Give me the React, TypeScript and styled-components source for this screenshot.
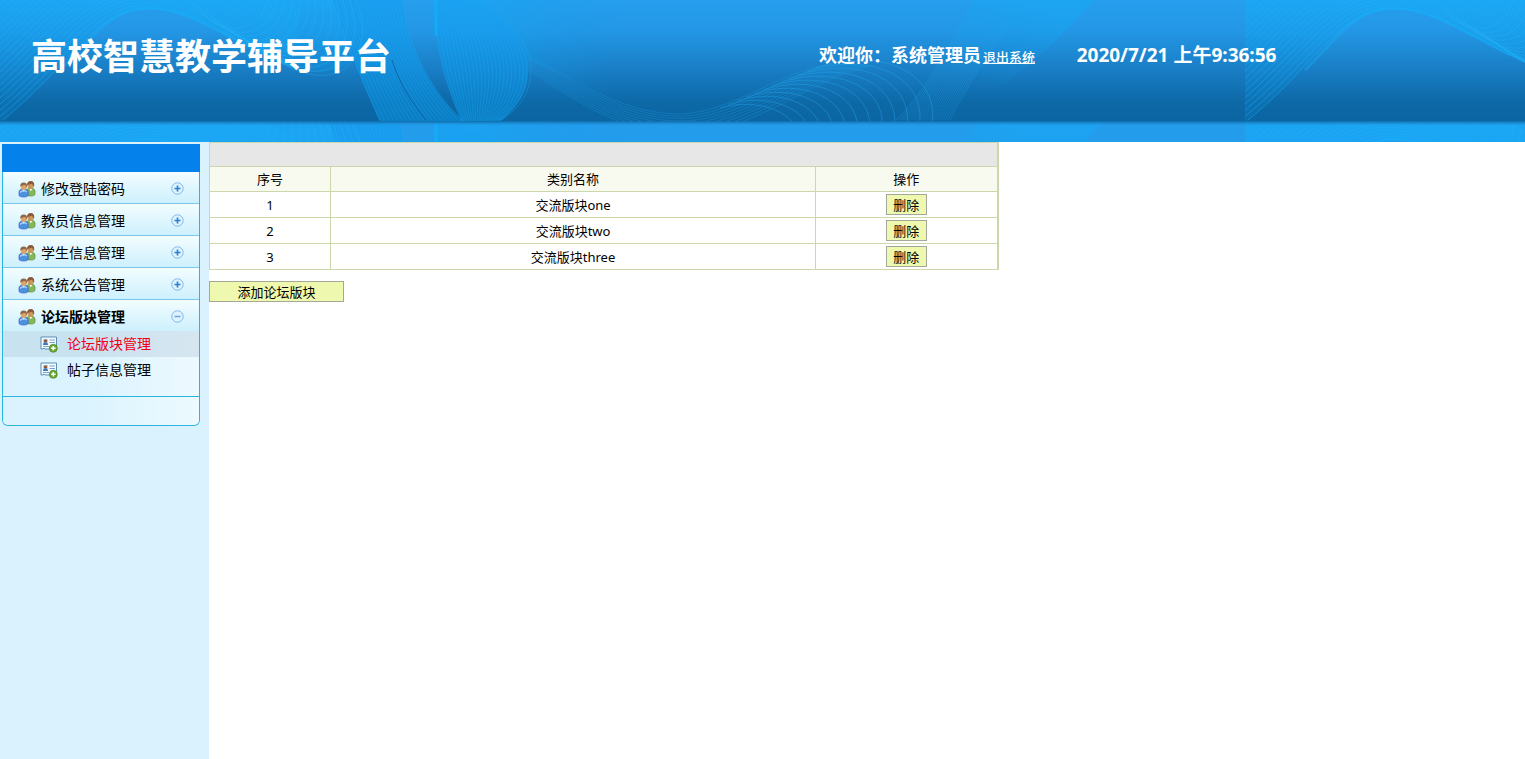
import React from "react";
import styled, { createGlobalStyle } from "styled-components";

const GlobalStyle = createGlobalStyle`
  *, *::before, *::after { box-sizing: border-box; }
  html, body, #root { height: 100%; }
  body {
    margin: 0;
    background: #fff;
    color: #000;
    font-family: "Noto Sans", "Noto Sans CJK SC", sans-serif;
    font-size: 13px;
  }
`;

const Page = styled.div`
  display: flex;
  flex-direction: column;
  min-height: 100%;
`;

const Header = styled.header`
  position: relative;
  display: grid;
  grid-template-columns: 53.7% 16.9% 1fr;
  align-items: center;
  height: 142px;
  padding-bottom: 30px;
  overflow: hidden;
  color: #fff;
  background: #2199ea;
`;

const Backdrop = styled.svg`
  position: absolute;
  inset: 0;
  width: 100%;
  height: 100%;
`;

const Title = styled.h1`
  position: relative;
  margin: 0;
  padding: 2px 0 0 31px;
  font-size: 36px;
  line-height: 48px;
  font-weight: 700;
`;

const Welcome = styled.div`
  position: relative;
  display: flex;
  align-items: baseline;
  gap: 2px;
  font-size: 18px;
  line-height: 24px;
  font-weight: 700;
  white-space: nowrap;
`;

const LogoutLink = styled.a`
  color: #fff;
  font-size: 13px;
  font-weight: 500;
`;

const Clock = styled.time`
  position: relative;
  padding-bottom: 2px;
  font-size: 19px;
  line-height: 24px;
  font-weight: 700;
  white-space: nowrap;
`;

const Body = styled.div`
  display: flex;
  flex: 1;
`;

const Sidebar = styled.aside`
  flex: 0 0 209px;
  padding: 2px 9px 0 2px;
  background: #daf2fe;
`;

const MenuBanner = styled.div`
  height: 28px;
  background: #0581ec;
`;

const Menu = styled.nav`
  border: 1px solid #2bb4dc;
  border-top: 0;
  border-radius: 0 0 6px 6px;
  overflow: hidden;
`;

const MenuGroup = styled.button<{ $open?: boolean }>`
  display: flex;
  align-items: center;
  width: 100%;
  height: ${(p) => (p.$open ? "31px" : "32px")};
  padding: 2px 15px 0 15px;
  border: 0;
  border-bottom: ${(p) => (p.$open ? "0" : "1px solid #7cc6ee")};
  background: linear-gradient(#f3fdff, #cdf0fd);
  color: #000;
  font: inherit;
  font-size: 14px;
  font-weight: ${(p) => (p.$open ? 700 : 400)};
  text-align: left;
  cursor: pointer;
`;

const MenuLabel = styled.span`
  flex: 1;
  padding: 0 0 2px 5px;
`;

const SubMenu = styled.ul`
  margin: 0;
  padding: 0 0 13px;
  list-style: none;
  background: linear-gradient(90deg, #daf3fe 40%, #edf9ff);
`;

const SubLink = styled.a<{ $active?: boolean }>`
  display: flex;
  align-items: center;
  height: 26px;
  padding-left: 37px;
  background: ${(p) => (p.$active ? "linear-gradient(90deg, #c9e2ef 40%, #d6e6f1)" : "none")};
  color: ${(p) => (p.$active ? "#f00014" : "#000")};
  font-size: 14px;
  text-decoration: none;
`;

const SubLabel = styled.span`
  padding: 0 0 2px 9px;
`;

const MenuFooter = styled.div`
  height: 29px;
  border-top: 1px solid #2bb4dc;
  background: linear-gradient(90deg, #daf3fe 40%, #edfaff);
`;

const Main = styled.main`
  flex: 1;
`;

const Table = styled.table`
  width: 60%;
  border-collapse: collapse;
  table-layout: fixed;
  border: 1px solid #cbd8ac;
  border-right-width: 2px;
`;

const Column = styled.col<{ $width?: string }>`
  width: ${(p) => p.$width ?? "auto"};
`;

const BarCell = styled.td`
  height: 24px;
  padding: 0;
  background: #e7e7e7;
`;

const HeadCell = styled.th`
  height: 25px;
  padding: 0;
  border: 1px solid #cbd8ac;
  background: #f9faef;
  font-weight: 400;
  line-height: 18px;
`;

const Cell = styled.td`
  height: 26px;
  padding: 0;
  border: 1px solid #cbd8ac;
  text-align: center;
  line-height: 18px;
`;

const ActionButton = styled.button<{ $wide?: boolean }>`
  display: block;
  width: ${(p) => (p.$wide ? "135px" : "41px")};
  height: 21px;
  margin: ${(p) => (p.$wide ? "11px 0 0" : "0 auto")};
  padding: 0;
  border: 1px solid #a3a898;
  background: #eef8ae;
  color: #000;
  font: inherit;
  line-height: 18px;
  cursor: pointer;
`;

type Curve = number[];

/* Evenly spaced curves between two cubic paths given as flat coordinate lists. */
function blend(a: Curve, b: Curve, count: number): string[] {
  return Array.from({ length: count }, (_, i) => {
    const t = i / (count - 1);
    const p = a.map((v, k) => Math.round((v + (b[k] - v) * t) * 10) / 10);
    let d = `M${p[0]} ${p[1]}`;
    for (let k = 2; k < p.length; k += 6) {
      d += `C${p.slice(k, k + 6).join(" ")}`;
    }
    return d;
  });
}

const archLines = blend(
  [3, 120, 70, 66, 95, 9, 148, 8, 195, 8, 240, 48, 292, 66],
  [-70, 40, -20, -10, 20, -60, 110, -60, 190, -60, 230, -20, 300, 10],
  24
);
const fanLines = blend(
  [190, 0, 215, 36, 255, 40, 268, 0, 270, -10, 270, -20, 270, -30],
  [270, 56, 310, 84, 352, 84, 362, 40, 366, 10, 350, -10, 340, -30],
  13
);
const ribbonLines = blend(
  [325, -20, 340, 20, 352, 60, 380, 120],
  [400, -20, 404, 40, 425, 85, 464, 122],
  20
);
const leafLines = blend(
  [436, -20, 434, 40, 440, 70, 462, 122],
  [440, -20, 560, 30, 540, 100, 500, 120],
  24
);
const troughLines = blend(
  [528, 55, 590, 90, 630, 114, 680, 114, 740, 112, 790, 60, 850, 64],
  [528, 70, 590, 110, 630, 138, 700, 132, 760, 126, 810, 80, 870, 66],
  9
);
const loopLines = blend(
  [720, 108, 755, 98, 785, 110, 795, 125],
  [815, 68, 885, 45, 940, 75, 932, 125],
  12
);
const beamLines = blend(
  [896, 120, 935, 80, 950, 40, 985, -20],
  [950, 120, 965, 90, 1000, 30, 1050, -20],
  22
);

function Waves() {
  const sets: [string[], string, number][] = [
    [archLines, "#14b4fc", 0.42],
    [fanLines, "#20b4fa", 0.34],
    [ribbonLines, "#16acf4", 0.3],
    [leafLines, "#18b0f8", 0.3],
    [troughLines, "#1a9ce4", 0.32],
    [loopLines, "#1fa4ec", 0.42],
    [beamLines, "#1fa4ec", 0.3],
  ];
  return (
    <g fill="none">
      <path d="M-4 -20V124L3 120C70 66 95 9 148 8C195 8 240 48 292 66C315 76 340 72 354 60L325 -20Z" fill="url(#sheen)" />
      <path d="M325 -20C340 20 352 60 380 122H464C425 85 404 40 400 -20Z" fill="#0b9cf0" opacity="0.45" />
      <path d="M436 -20C434 40 440 70 462 122H500C520 105 530 90 528 60C520 20 480 0 450 -20Z" fill="#0aa0f4" opacity="0.4" />
      <path d="M450 -20C480 0 520 20 528 60L600 92L670 114L640 -20Z" fill="url(#fade)" />
      <path d="M896 120C935 80 950 40 985 -20H1110C1050 60 990 90 960 120Z" fill="url(#fade2)" />
      {sets.map(([lines, color, opacity], s) =>
        lines.map((d, i) => (
          <path key={`${s}-${i}`} d={d} stroke={color} strokeOpacity={opacity} />
        ))
      )}
      <path d="M60 70C95 35 110 9 148 8C195 8 240 48 292 66" stroke="#10b4ff" strokeWidth="3" strokeOpacity="0.35" />
      <path d="M436 -20V36" stroke="#0cb4ff" strokeWidth="3" strokeOpacity="0.6" />
      <path d="M392 60C400 85 410 100 426 120" stroke="#07578f" strokeOpacity="0.7" />
    </g>
  );
}

function HeaderArt() {
  return (
    <Backdrop aria-hidden="true">
      <defs>
        <linearGradient id="deep" x1="0" y1="0" x2="0" y2="1">
          <stop offset="0" stopColor="#269fee" />
          <stop offset="0.25" stopColor="#2397e5" />
          <stop offset="0.55" stopColor="#1a80c8" />
          <stop offset="0.85" stopColor="#0d68a6" />
          <stop offset="1" stopColor="#0b65a2" />
        </linearGradient>
        <linearGradient id="edge" x1="0" y1="0" x2="0" y2="1">
          <stop offset="0" stopColor="#0b65a2" stopOpacity="0.9" />
          <stop offset="0.4" stopColor="#1677b8" stopOpacity="0.6" />
          <stop offset="1" stopColor="#2199ea" stopOpacity="0" />
        </linearGradient>
        <linearGradient id="sheen" gradientUnits="userSpaceOnUse" x1="0" y1="0" x2="0" y2="120">
          <stop offset="0" stopColor="#14acf8" stopOpacity="0.5" />
          <stop offset="0.65" stopColor="#0a98e8" stopOpacity="0.25" />
          <stop offset="1" stopColor="#0a8cdc" stopOpacity="0.2" />
        </linearGradient>
        <linearGradient id="fade" gradientUnits="userSpaceOnUse" x1="450" y1="0" x2="620" y2="30">
          <stop offset="0" stopColor="#10aef8" stopOpacity="0.5" />
          <stop offset="1" stopColor="#1098e8" stopOpacity="0" />
        </linearGradient>
        <linearGradient id="fade2" gradientUnits="userSpaceOnUse" x1="1020" y1="0" x2="980" y2="90">
          <stop offset="0" stopColor="#10aef8" stopOpacity="0.38" />
          <stop offset="1" stopColor="#1098e8" stopOpacity="0" />
        </linearGradient>
        <pattern id="tile" width="1245" height="142" patternUnits="userSpaceOnUse">
          <svg width="1245" height="121">
            <rect width="1245" height="121" fill="url(#deep)" />
            <Waves />
          </svg>
          <svg y="121" width="1245" height="21" viewBox="0 -10 1245 21">
            <rect y="-10" width="1245" height="21" fill="#249cec" />
            <Waves />
          </svg>
          <rect y="121" width="1245" height="5" fill="url(#edge)" />
        </pattern>
      </defs>
      <rect width="100%" height="142" fill="url(#tile)" />
    </Backdrop>
  );
}

function PeopleIcon() {
  return (
    <svg width="18" height="18" viewBox="0 0 18 18" aria-hidden="true">
      <path d="M8.5 14.5V11c0-2 1.500-3 4-3s4.500 1 4.500 3v3c0 1.300-1.500 2-4 2s-4-.5-4.500-1.500z" fill="#86b65a" stroke="#5b8c3c" strokeWidth=".7" />
      <path d="M11.500 9l1.300 2.500L14.300 9z" fill="#f2f6e0" />
      <ellipse cx="12.500" cy="5.300" rx="3" ry="3.700" fill="#c9985c" />
      <path d="M9 5.500C8.800 2.500 10.300 1 12.600 1c2.600 0 4 1.700 3.600 4.900l-.7 1.500c0-2-.6-3-2-3.600-1.500.8-3 .6-4.500 1.700z" fill="#8a5a34" />
      <path d="M1 15v-3c0-2 1.700-3 4.500-3s4.700 1 4.700 3v3c0 1.300-1.700 2-4.600 2S1 16.300 1 15z" fill="#4d8fe0" stroke="#2b62ba" strokeWidth=".7" />
      <path d="M2 12.500c1.500-2 5-2.200 7-.6" stroke="#a5cffa" strokeWidth="1.300" fill="none" />
      <path d="M4.200 9.300l1.500 2.400 1.500-2.400z" fill="#fff" />
      <ellipse cx="5.700" cy="6.700" rx="2.900" ry="3.500" fill="#d8a66c" />
      <path d="M2.300 6.800C2 4 3.400 2.600 5.700 2.600S9.400 4 9 6.900l-.6 1C8.400 6.500 8 5.600 6.800 5c-1.400.7-3 .3-4.500 1.800z" fill="#946540" />
    </svg>
  );
}

function CardIcon() {
  return (
    <svg width="18" height="18" viewBox="0 0 18 18" aria-hidden="true">
      <path d="M1 2h15.500v12H15l-1-1-1 1H5l-1-1-1 1H1z" fill="#f4faff" stroke="#5a8db8" />
      <rect x="3" y="4" width="5" height="6" fill="#b9daf5" />
      <circle cx="5.500" cy="6" r="1.700" fill="#8d5730" />
      <path d="M3 10c.2-2 1-2.500 2.500-2.500S7.800 8 8 10z" fill="#3878c4" />
      <path d="M9.500 5H15M9.500 7.500H15M3 11.500h6" stroke="#7ba6cc" />
      <circle cx="13.300" cy="13.300" r="4" fill="#69a82e" stroke="#4d8421" strokeWidth=".7" />
      <path d="M13.300 11v4.600M11 13.300h4.600" stroke="#fff" strokeWidth="1.500" />
    </svg>
  );
}

function ToggleIcon({ open }: { open?: boolean }) {
  return (
    <svg width="13" height="13" viewBox="0 0 13 13" fill="none" aria-hidden="true">
      <circle cx="6.500" cy="6.500" r="5.700" fill="#dff3ff" stroke="#7fb6e8" />
      {open ? (
        <path d="M3.500 6.500h6" stroke="#68a5df" strokeWidth="1.400" />
      ) : (
        <path d="M3.500 6.500h6M6.500 3.500v6" stroke="#3180cf" strokeWidth="1.700" />
      )}
    </svg>
  );
}

const groups = ["修改登陆密码", "教员信息管理", "学生信息管理", "系统公告管理", "论坛版块管理"];
const boards = ["交流版块one", "交流版块two", "交流版块three"];

export default function App() {
  return (
    <Page>
      <GlobalStyle />
      <Header>
        <HeaderArt />
        <Title>高校智慧教学辅导平台</Title>
        <Welcome>
          <span>欢迎你：系统管理员</span>
          <LogoutLink href="#logout">退出系统</LogoutLink>
        </Welcome>
        <Clock dateTime="2020-07-21T09:36:56">2020/7/21 上午9:36:56</Clock>
      </Header>
      <Body>
        <Sidebar>
          <MenuBanner />
          <Menu>
            {groups.map((name, i) => {
              const open = i === groups.length - 1;
              return (
                <MenuGroup key={name} type="button" $open={open} aria-expanded={open}>
                  <PeopleIcon />
                  <MenuLabel>{name}</MenuLabel>
                  <ToggleIcon open={open} />
                </MenuGroup>
              );
            })}
            <SubMenu>
              <li>
                <SubLink href="#boards" $active>
                  <CardIcon />
                  <SubLabel>论坛版块管理</SubLabel>
                </SubLink>
              </li>
              <li>
                <SubLink href="#posts">
                  <CardIcon />
                  <SubLabel>帖子信息管理</SubLabel>
                </SubLink>
              </li>
            </SubMenu>
            <MenuFooter />
          </Menu>
        </Sidebar>
        <Main>
          <Table>
            <colgroup>
              <Column $width="121px" />
              <Column />
              <Column $width="182px" />
            </colgroup>
            <thead>
              <tr>
                <BarCell colSpan={3} />
              </tr>
              <tr>
                <HeadCell scope="col">序号</HeadCell>
                <HeadCell scope="col">类别名称</HeadCell>
                <HeadCell scope="col">操作</HeadCell>
              </tr>
            </thead>
            <tbody>
              {boards.map((name, i) => (
                <tr key={name}>
                  <Cell>{i + 1}</Cell>
                  <Cell>{name}</Cell>
                  <Cell>
                    <ActionButton type="button">删除</ActionButton>
                  </Cell>
                </tr>
              ))}
            </tbody>
          </Table>
          <ActionButton type="button" $wide>
            添加论坛版块
          </ActionButton>
        </Main>
      </Body>
    </Page>
  );
}
